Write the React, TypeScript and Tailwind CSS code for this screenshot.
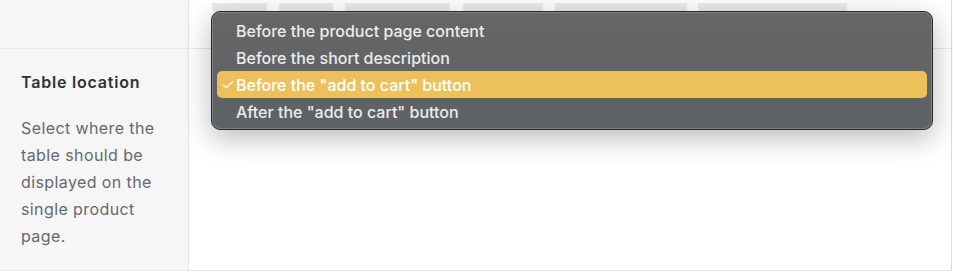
import { Check } from "lucide-react";

const chips = [
  { w: 55, gap: 0 },
  { w: 54, gap: 12 },
  { w: 105, gap: 12 },
  { w: 80, gap: 13 },
  { w: 132, gap: 12 },
  { w: 149, gap: 11 },
];

const options = [
  "Before the product page content",
  "Before the short description",
  'Before the "add to cart" button',
  'After the "add to cart" button',
];

export default function App() {
  return (
    <div
      className="relative w-[953px] h-[275px] bg-white overflow-hidden"
      style={{ fontFamily: "Inter, 'Noto Sans', Arial, sans-serif" }}
    >
      <div className="w-[952px] border-r border-[#dcdcdc]">
        {/* top row */}
        <div className="flex h-[49px] border-b border-[#e8e8e8]">
          <div className="w-[189px] shrink-0 bg-[#f6f6f6] border-r border-[#e4e4e4]" />
          <div className="flex items-start pl-[23px] pt-[3px]">
            {chips.map((c, i) => (
              <div
                key={i}
                className="h-[9px] rounded-b-sm bg-[#ebebeb]"
                style={{ width: c.w, marginLeft: c.gap }}
              />
            ))}
          </div>
        </div>

        {/* table location row */}
        <div className="flex h-[222px] border-b border-[#e8e8e8]">
          <div className="w-[189px] shrink-0 bg-[#f6f6f6] border-r border-[#e4e4e4] pl-[21px] pr-[16px] pt-[21px]">
            <div className="text-[16px] font-semibold tracking-[0.8px] text-[#2c3338] leading-[24px]">
              Table location
            </div>
            <p className="mt-[21px] text-[16px] tracking-[0.4px] leading-[27px] text-[#646970] w-[150px]">
              Select where the table should be displayed on the single product page.
            </p>
          </div>
          <div className="flex-1" />
        </div>
      </div>

      {/* open select menu */}
      <div className="absolute left-[211px] top-[11px] w-[722px] rounded-[9px] border border-[#2a2a2a] bg-gradient-to-b from-[#656665] to-[#5d6266] px-[5px] pt-[5px] pb-[4px] shadow-[0_8px_28px_rgba(0,0,0,0.28),inset_0_0_0_1px_rgba(255,255,255,0.18)]">
        {options.map((o, i) => {
          const active = i === 2;
          return (
            <div
              key={o}
              className={
                active
                  ? "flex items-center h-[27px] rounded-[5px] bg-[#ecc15b] text-white"
                  : "flex items-center h-[27px] rounded-[5px] text-[#ececec]"
              }
            >
              <span className="w-[19px] pl-[4px] flex items-center">
                {active && <Check className="w-[14px] h-[14px]" strokeWidth={2} />}
              </span>
              <span className="text-[16px] font-medium leading-none">{o}</span>
            </div>
          );
        })}
      </div>
    </div>
  );
}
